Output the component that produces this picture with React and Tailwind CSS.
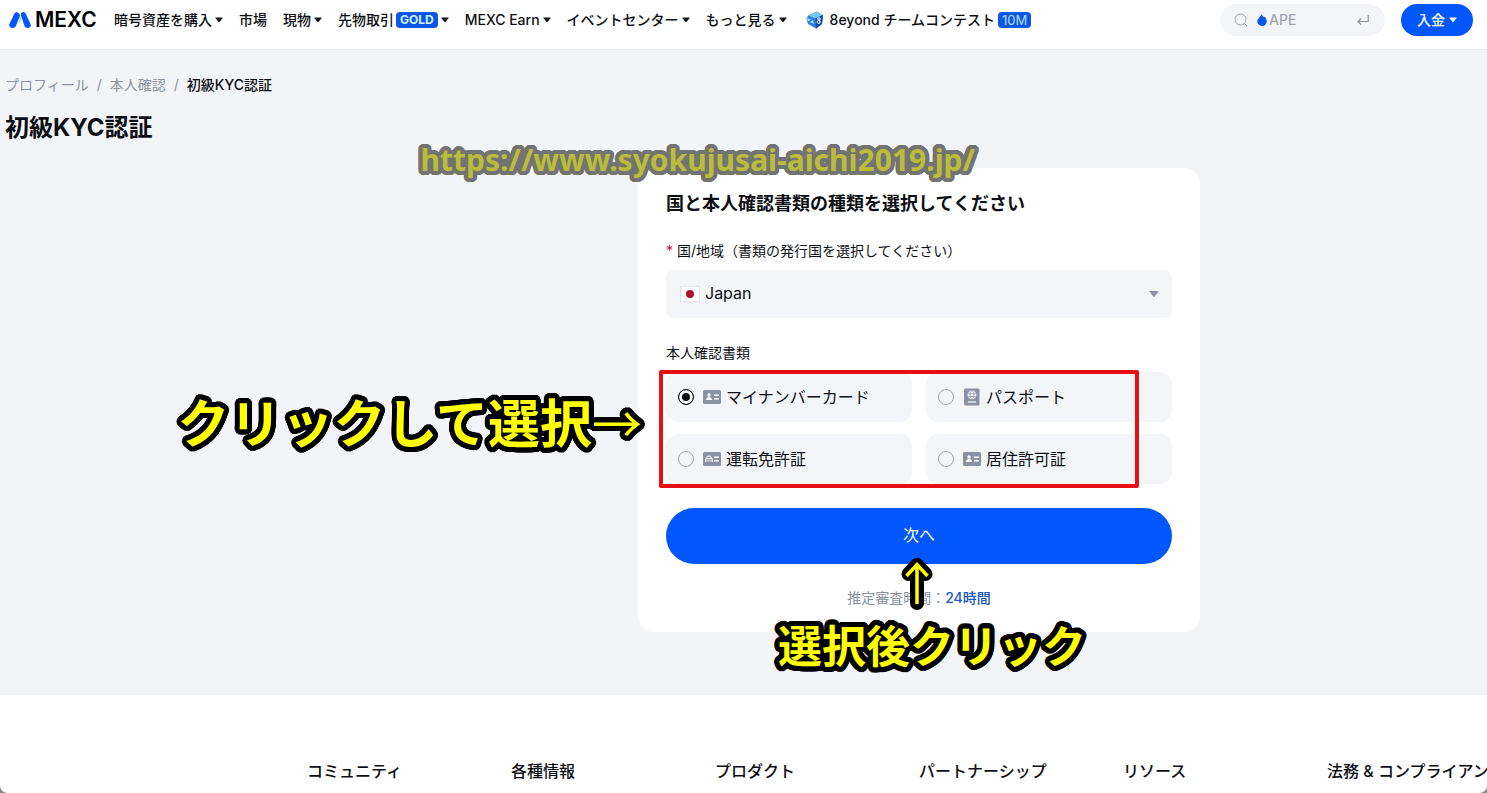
import React, { useState } from "react";

const Caret = ({ className = "" }) => (
  <svg className={`h-1.5 w-2 shrink-0 ${className}`} viewBox="0 0 8 6" fill="currentColor" aria-hidden="true">
    <path d="M0.8 0.5h6.4a.4.4 0 0 1 .3.7L4.4 5.1a.5.5 0 0 1-.8 0L.5 1.2a.4.4 0 0 1 .3-.7z" />
  </svg>
);

const Logo = () => (
  <a href="#home" className="flex w-[89px] items-center gap-1 text-[21px] font-semibold text-black">
    <svg className="h-4 w-[22px] shrink-0" viewBox="0 0 22 16" aria-hidden="true">
      <path d="M.4 12 5.2 1.9C6.2-.3 9.1-.3 10.1 1.8l.9 1.8-4.1 10.500C6 16 3.700 16.200 2.200 15.700.5 15.100-.3 13.500.4 12z" fill="#0156fe" />
      <path d="M11.600 2.300c.8-2.700 4-3 5.200-.6l4.800 10.500c.7 1.600-.1 3-1.600 3.500-1.700.6-3.800 0-4.500-1.700z" fill="#0156fe" />
      <path d="m11 3.600 1.300 3.200-3 7z" fill="#0a3fc4" opacity=".3" />
    </svg>
    MEXC
  </a>
);

const CubeIcon = () => (
  <svg className="h-[18px] w-[18px]" viewBox="0 0 18 18" aria-hidden="true">
    <path d="M2 4.500 10.500.5 17 4l-1 9-6 4.500L2 13 .5 8z" fill="#2a83dc" />
    <path d="M2 4.500 10.500.5 17 4l-7.500 3.500z" fill="#7cc6f5" />
    <path d="M9.500 7.500 17 4l-1 9-6 4.500z" fill="#0c4bb0" />
    <path d="m1 7 4 1.500-3 2zM4 11l3-2 1 4z" fill="#a9dcfa" />
    <circle cx="13" cy="8" r="1.300" fill="none" stroke="#fff" />
    <circle cx="12.700" cy="11" r="1.500" fill="none" stroke="#fff" />
  </svg>
);

const IdIcon = () => (
  <svg className="h-4 w-[18px]" viewBox="0 0 18 16" aria-hidden="true">
    <rect y="1" width="18" height="14" rx="1.500" fill="#8a92a3" />
    <circle cx="6" cy="6" r="1.700" fill="#fff" />
    <path d="M3 11c0-2 1.300-3 3-3s3 1 3 3zM11 5.500h5V7h-5zM11 9h5v1.500h-5z" fill="#fff" />
  </svg>
);

const LicenseIcon = () => (
  <svg className="h-4 w-[18px]" viewBox="0 0 18 16" aria-hidden="true">
    <rect y="1" width="18" height="14" rx="1.500" fill="#8a92a3" />
    <path d="M3.700 7.500 4.300 5.200h3.400l.6 2.300M2.700 11V7.700h6.600V11" fill="none" stroke="#fff" />
    <path d="M2.500 9.400h7v.9h-7zM11 5.500h5V7h-5zM11 9h5v1.500h-5z" fill="#fff" />
  </svg>
);

const PassportIcon = () => (
  <svg className="h-[18px] w-[18px]" viewBox="0 0 18 18" aria-hidden="true">
    <rect x="1" y="0.500" width="15.500" height="17" rx="1.500" fill="#8a92a3" />
    <circle cx="9" cy="7" r="4.400" fill="#fff" />
    <g fill="none" stroke="#8a92a3" strokeWidth=".8">
      <ellipse cx="9" cy="7" rx="1.900" ry="4.400" />
      <path d="M4.600 5.700h8.800M4.600 8.400h8.800" />
    </g>
    <path d="M5 14h8" stroke="#fff" strokeWidth="1.200" />
  </svg>
);

// round outline round a text, as a ring of hard shadows
const outline = (radius, color) => {
  const steps = 32;
  const shadows = [];
  for (const r of [radius, radius / 2]) {
    for (let i = 0; i < steps; i++) {
      const a = (i / steps) * Math.PI * 2;
      shadows.push(`${(Math.cos(a) * r).toFixed(2)}px ${(Math.sin(a) * r).toFixed(2)}px 0 ${color}`);
    }
  }
  return { textShadow: shadows.join(",") };
};

const navItems = [
  { label: "暗号資産を購入", caret: true },
  { label: "市場" },
  { label: "現物", caret: true },
  { label: "先物取引", badge: "GOLD", caret: true },
  { label: "MEXC Earn", caret: true },
  { label: "イベントセンター", caret: true },
  { label: "もっと見る", caret: true },
];

const documents = [
  { id: "mynumber", label: "マイナンバーカード", Icon: IdIcon },
  { id: "passport", label: "パスポート", Icon: PassportIcon },
  { id: "license", label: "運転免許証", Icon: LicenseIcon },
  { id: "residence", label: "居住許可証", Icon: IdIcon },
];

const footerLinks = [
  "コミュニティ",
  "各種情報",
  "プロダクト",
  "パートナーシップ",
  "リソース",
  "法務 & コンプライアンス",
];

const Header = () => (
  <header className="flex h-[50px] justify-between border-b border-[#ebecf0] bg-white pt-1 pr-3.5 pb-3 pl-[9px] whitespace-nowrap">
    <div className="flex h-8 items-center gap-4">
      <Logo />
      <nav className="flex items-center gap-4 text-sm font-medium">
        {navItems.map((item) => (
          <a key={item.label} href="#nav" className="flex items-center">
            {item.label}
            {item.badge && (
              <span className="ml-0.5 rounded bg-[#0b57e8] px-1 text-xs leading-4 font-bold text-[#d5efff]">{item.badge}</span>
            )}
            {item.caret && <Caret className="ml-[3px]" />}
          </a>
        ))}
        <a href="#contest" className="ml-[3px] flex items-center">
          <CubeIcon />
          <span className="ml-1.5">8eyond チームコンテスト</span>
          <span className="ml-[3px] rounded bg-[#0b57e8] px-1 text-[13px] leading-4 font-normal text-[#b5dcff]">10M</span>
        </a>
      </nav>
    </div>
    <div className="flex h-8 items-center gap-4">
      <label className="flex h-8 w-[165px] items-center rounded-full bg-[#f4f5f9] px-3.5">
        <svg className="h-3.5 w-3.5 shrink-0" viewBox="0 0 14 14" fill="none" stroke="#9aa1b0" aria-hidden="true">
          <circle cx="6.500" cy="6.500" r="5.500" />
          <path d="m10.500 10.500 2.500 2.500" />
        </svg>
        <svg className="ml-2 h-3 w-3 shrink-0" viewBox="0 0 12 12" fill="#0b57e8" aria-hidden="true">
          <path d="M5.800 0c.4 2 1.700 2.500 2.300 3.500l.6-.9c1.300 1.500 2 3 2 4.600C10.700 10 8.700 12 6 12s-4.700-2-4.700-4.700C1.300 4.600 4.500 3.200 5.800 0z" />
        </svg>
        <input aria-label="検索" placeholder="APE" className="ml-px w-0 flex-1 bg-transparent text-sm font-medium outline-none placeholder:text-[#a0a6b4]" />
        <svg className="mx-0.5 h-3 w-3 shrink-0" viewBox="0 0 12 12" fill="none" stroke="#8a92a3" strokeWidth="1.200" aria-hidden="true">
          <path d="M11.200 1v6.500H1.200M4 4.500l-3 3 3 3" />
        </svg>
      </label>
      <button className="flex h-8 w-[72px] items-center justify-center gap-1 rounded-full bg-[#0156fe] text-sm font-medium text-white">
        入金
        <Caret />
      </button>
    </div>
  </header>
);

const App = () => {
  const [selected, setSelected] = useState("mynumber");

  return (
    <div className="min-h-screen bg-[#8b8b8b] font-['Inter','Noto_Sans_CJK_JP',sans-serif] text-[#0d0f14]">
      <div className="flex min-h-screen flex-col overflow-hidden rounded-b-lg bg-white">
        <Header />

        <main className="bg-[#f3f4f8] pt-[25px] pb-[63px]">
          <nav className="flex gap-2 pl-[5px] text-sm leading-5 text-[#8a92a3]">
            <a href="#profile">プロフィール</a>
            <span>/</span>
            <a href="#identity">本人確認</a>
            <span>/</span>
            <span className="font-medium text-[#0d0f14]">初級KYC認証</span>
          </nav>
          <h1 className="mt-[17px] pl-[5px] text-2xl leading-8 font-bold">初級KYC認証</h1>

          <div className="mt-6 flex max-w-[1200px] justify-end">
            <section className="relative w-[562px] rounded-2xl bg-white px-7 pt-[23px] pb-6">
              <h2 className="text-lg leading-[26px] font-bold">国と本人確認書類の種類を選択してください</h2>

              <label htmlFor="country" className="mt-6 block text-sm leading-5">
                <span className="text-[#c8102e]">*</span> 国/地域（書類の発行国を選択してください）
              </label>
              <div className="relative mt-[9px]">
                <select id="country" className="h-12 w-full appearance-none rounded-lg bg-[#f4f5f9] pb-0.5 pl-[39px] text-base outline-none">
                  <option>Japan</option>
                </select>
                <svg className="pointer-events-none absolute top-4 left-3.5 h-4 w-5" viewBox="0 0 20 16" aria-hidden="true">
                  <rect x=".5" y=".5" width="19" height="15" fill="#fff" stroke="#e3e5ea" />
                  <circle cx="10" cy="8" r="4" fill="#b0122f" />
                </svg>
                <Caret className="pointer-events-none absolute top-[21px] right-3.5 scale-125 text-[#8a92a3]" />
              </div>

              <fieldset className="mt-[25px]">
                <legend className="text-sm leading-5">本人確認書類</legend>
                <div className="relative mt-[9px] grid grid-cols-2 gap-x-3.5 gap-y-3">
                  {documents.map(({ id, label, Icon }) => (
                    <label key={id} className="flex h-[50px] items-center rounded-xl bg-[#f4f5f9] pl-3 text-base">
                      <input
                        type="radio"
                        name="document"
                        checked={selected === id}
                        onChange={() => setSelected(id)}
                        className="mr-[9px] h-4 w-4 appearance-none rounded-full border border-[#a0a6b4] bg-transparent checked:border-[#0d0f14] checked:bg-[#0d0f14] checked:shadow-[inset_0_0_0_3px_#fff]"
                      />
                      <Icon />
                      <span className="ml-[5px]">{label}</span>
                    </label>
                  ))}
                  <div className="pointer-events-none absolute -top-0.5 -left-[7px] h-[118px] w-[480px] rounded-xs border-4 border-[#e60f14]" />
                </div>
              </fieldset>

              <button className="mt-6 h-14 w-full rounded-full bg-[#0156fe] pb-0.5 text-base text-white">次へ</button>
              <p className="mt-6 text-center text-sm leading-5 text-[#8a92a3]">
                推定審査時間：<span className="font-medium text-[#1558b8]">24時間</span>
              </p>

              {/* tutorial annotations */}
              <p
                className="pointer-events-none absolute -top-7 right-[225px] font-['Noto_Sans',sans-serif] text-[30px] leading-10 font-bold whitespace-nowrap text-[#babd3a]"
                style={outline(4, "#737373")}
              >
                https://www.syokujusai-aichi2019.jp/
              </p>
              <p
                className="pointer-events-none absolute top-[217px] right-[558px] text-[52px] leading-[72px] font-bold whitespace-nowrap text-[#ffff00]"
                style={outline(5, "#000")}
              >
                クリックして選択<span className="font-['Noto_Sans_CJK_JP',sans-serif] text-[50px] font-normal">→</span>
              </p>
              <svg className="pointer-events-none absolute top-[388px] left-[262px] h-14 w-9" viewBox="0 0 36 56" fill="none" aria-hidden="true">
                <path d="M17 47V9M8.500 18 17 9l8.500 9" stroke="#000" strokeWidth="14" strokeLinejoin="round" strokeLinecap="round" />
                <path d="M17 48V8M6.500 20 17 8.500 27.500 20" stroke="#ffff00" strokeWidth="3.500" />
              </svg>
              <p
                className="pointer-events-none absolute top-[447px] left-[140px] text-[44px] leading-[64px] font-bold whitespace-nowrap text-[#ffff00]"
                style={outline(5, "#000")}
              >
                選択後クリック
              </p>
            </section>
          </div>
        </main>

        <footer className="flex bg-white pt-16 pb-2 pl-[307px] text-base leading-6 font-medium whitespace-nowrap">
          {footerLinks.map((link) => (
            <a key={link} href="#footer" className="w-[204px] shrink-0">{link}</a>
          ))}
        </footer>
      </div>
    </div>
  );
};

export default App;
